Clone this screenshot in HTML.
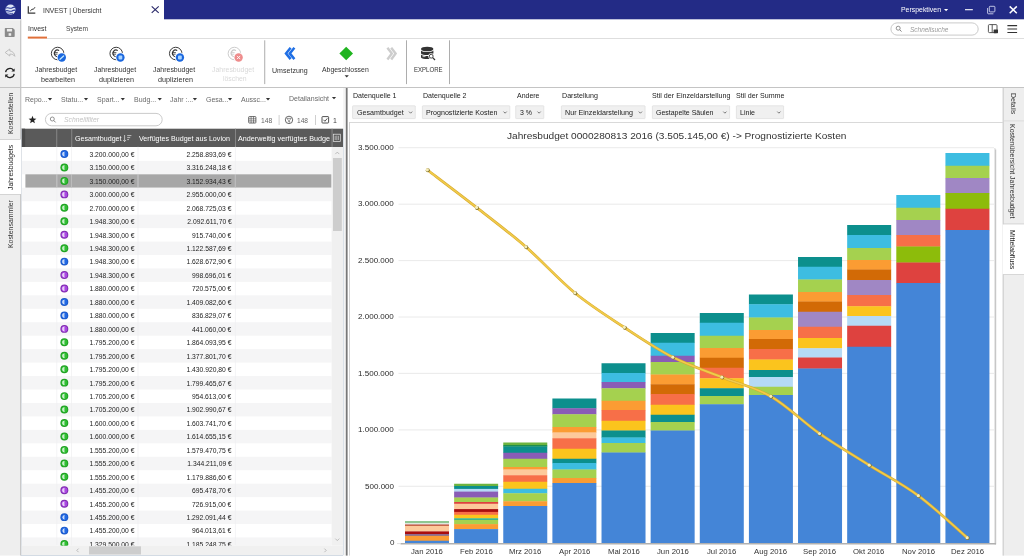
<!DOCTYPE html>
<html><head><meta charset="utf-8"><title>INVEST | Übersicht</title>
<style>
html,body{margin:0;padding:0;}
body{width:1024px;height:560px;overflow:hidden;background:#fff;position:relative;font-family:"Liberation Sans",sans-serif;}
#w{left:0;top:0;width:1024px;height:560px;will-change:transform;}
body div,body span.t{position:absolute;}
span.t{white-space:pre;}
svg.ov{position:absolute;left:0;top:0;}
</style></head><body><div id="w">
<svg class="ov" width="1024" height="560" viewBox="0 0 1024 560">
<rect x="0" y="0" width="1024" height="19.3" fill="#232b86"/>
<rect x="21" y="0" width="143" height="20" fill="#fff"/>
<rect x="0" y="19" width="20" height="536.6" fill="#eeeeee"/>
<rect x="20.1" y="19" width="1.2" height="536.6" fill="#c4c4c4"/>
<rect x="0" y="139.5" width="21" height="54.5" fill="#fff"/>
<rect x="0" y="19.2" width="20.6" height="1.2" fill="#f4f4f4"/>
<rect x="0" y="139" width="20" height="1" fill="#d4d4d4"/>
<rect x="0" y="194" width="20" height="1" fill="#d4d4d4"/>
<rect x="0" y="87" width="21" height="1" fill="#c4c4c4"/>
<rect x="47" y="38" width="977" height="1" fill="#dedede"/>
<rect x="27.8" y="36.6" width="19.2" height="2" fill="#e0703a"/>
<rect x="21" y="87" width="1003" height="1" fill="#c4c4c4"/>
<rect x="890.9" y="22.9" width="87.3" height="12.2" rx="6.1" fill="#fff" stroke="#c4c4c4" stroke-width="0.9"/>
<rect x="264.5" y="40.3" width="0.65" height="43.8" fill="#808080"/>
<rect x="406.0" y="40.3" width="0.65" height="43.8" fill="#808080"/>
<rect x="449.3" y="40.3" width="0.65" height="43.8" fill="#808080"/>
<rect x="45.4" y="113.4" width="116.8" height="12.4" rx="6.2" fill="#fff" stroke="#c4c4c4" stroke-width="0.9"/>
<rect x="278.6" y="115" width="1" height="10" fill="#cfcfcf"/>
<rect x="315" y="115" width="1" height="10" fill="#cfcfcf"/>
<rect x="21.5" y="128.7" width="321.5" height="18.3" fill="#5a5a5a"/>
<rect x="21.5" y="128.7" width="3.6" height="18.3" fill="#4a4a4a"/>
<rect x="56.3" y="128.7" width="0.9" height="18.3" fill="#8a8a8a"/>
<rect x="71.3" y="128.7" width="0.9" height="18.3" fill="#8a8a8a"/>
<rect x="235" y="128.7" width="0.9" height="18.3" fill="#8a8a8a"/>
<rect x="331.6" y="128.7" width="0.9" height="18.3" fill="#8a8a8a"/>
<clipPath id="tbb"><rect x="21" y="146.6" width="322" height="399"/></clipPath><g clip-path="url(#tbb)">
<rect x="21.7" y="160.85" width="309.8" height="13.450" fill="#f5f5f6"/>
<rect x="25.4" y="174.30" width="306.1" height="13.450" fill="#a7a7a7"/>
<rect x="21.7" y="187.75" width="309.8" height="13.450" fill="#f5f5f6"/>
<rect x="21.7" y="214.65" width="309.8" height="13.450" fill="#f5f5f6"/>
<rect x="21.7" y="241.55" width="309.8" height="13.450" fill="#f5f5f6"/>
<rect x="21.7" y="268.45" width="309.8" height="13.450" fill="#f5f5f6"/>
<rect x="21.7" y="295.35" width="309.8" height="13.450" fill="#f5f5f6"/>
<rect x="21.7" y="322.25" width="309.8" height="13.450" fill="#f5f5f6"/>
<rect x="21.7" y="349.15" width="309.8" height="13.450" fill="#f5f5f6"/>
<rect x="21.7" y="376.05" width="309.8" height="13.450" fill="#f5f5f6"/>
<rect x="21.7" y="402.95" width="309.8" height="13.450" fill="#f5f5f6"/>
<rect x="21.7" y="429.85" width="309.8" height="13.450" fill="#f5f5f6"/>
<rect x="21.7" y="456.75" width="309.8" height="13.450" fill="#f5f5f6"/>
<rect x="21.7" y="483.65" width="309.8" height="13.450" fill="#f5f5f6"/>
<rect x="21.7" y="510.55" width="309.8" height="13.450" fill="#f5f5f6"/>
<rect x="21.7" y="537.45" width="309.8" height="13.450" fill="#f5f5f6"/>
<rect x="56.4" y="146.6" width="0.8" height="399" fill="#eeeef0" opacity="0.8"/>
<rect x="56.4" y="174.30" width="0.8" height="13.45" fill="#b4b4b4"/>
<rect x="71.2" y="146.6" width="0.8" height="399" fill="#eeeef0" opacity="0.8"/>
<rect x="71.2" y="174.30" width="0.8" height="13.45" fill="#b4b4b4"/>
<rect x="137.6" y="146.6" width="0.8" height="399" fill="#eeeef0" opacity="0.8"/>
<rect x="137.6" y="174.30" width="0.8" height="13.45" fill="#b4b4b4"/>
<rect x="234.9" y="146.6" width="0.8" height="399" fill="#eeeef0" opacity="0.8"/>
<rect x="234.9" y="174.30" width="0.8" height="13.45" fill="#b4b4b4"/>
</g>
<rect x="21" y="128.7" width="0.6" height="426.5" fill="#d4dbe3"/>
<rect x="21" y="555" width="322" height="0.8" fill="#c9d3de"/>
<rect x="331.6" y="147" width="11.4" height="398.6" fill="#f0f0f0"/>
<rect x="333" y="158" width="8.8" height="73" fill="#cdcdcd"/>
<rect x="21.8" y="545.6" width="321.2" height="9.4" fill="#f0f0f0"/>
<rect x="89" y="546.3" width="52" height="8.2" fill="#cdcdcd"/>
<rect x="343.2" y="88" width="2.4" height="467.6" fill="#f4f4f4"/>
<rect x="343" y="128.7" width="0.7" height="426.5" fill="#cfd8e2"/>
<rect x="345.8" y="88" width="1.8" height="467.6" fill="#787878"/>
<rect x="352.59999999999997" y="105.8" width="62.7" height="12.8" rx="0.5" fill="#f0f0f0" stroke="#dddddd" stroke-width="0.7"/>
<rect x="422.4" y="105.8" width="87.4" height="12.8" rx="0.5" fill="#f0f0f0" stroke="#dddddd" stroke-width="0.7"/>
<rect x="515.6999999999999" y="105.8" width="28.099999999999998" height="12.8" rx="0.5" fill="#f0f0f0" stroke="#dddddd" stroke-width="0.7"/>
<rect x="561.4" y="105.8" width="83.7" height="12.8" rx="0.5" fill="#f0f0f0" stroke="#dddddd" stroke-width="0.7"/>
<rect x="652.4" y="105.8" width="77.2" height="12.8" rx="0.5" fill="#f0f0f0" stroke="#dddddd" stroke-width="0.7"/>
<rect x="736.4" y="105.8" width="47.2" height="12.8" rx="0.5" fill="#f0f0f0" stroke="#dddddd" stroke-width="0.7"/>
<rect x="349.2" y="122.1" width="653.6" height="0.9" fill="#d5d5d5"/>
<rect x="349.1" y="122.1" width="0.9" height="433.5" fill="#cfcfcf"/>
<rect x="1003" y="88" width="21" height="467.6" fill="#eeeeee"/>
<rect x="1002.6" y="88" width="1.1" height="467.6" fill="#cacaca"/>
<rect x="1002.6" y="224.3" width="21.4" height="50" fill="#fff"/>
<rect x="1003" y="120.5" width="21" height="0.8" fill="#d8d8d8"/>
<rect x="1003" y="223.5" width="21" height="0.8" fill="#d0d0d0"/>
<rect x="1003" y="274.2" width="21" height="0.8" fill="#d0d0d0"/>
</svg>
<span class="t" style="left:6.59px;top:133.6px;transform-origin:0 0;transform:rotate(-90deg) scaleX(0.93);font-size:7.42px;line-height:8.9px;color:#333;">Kostenstellen</span>
<span class="t" style="left:6.59px;top:189.6px;transform-origin:0 0;transform:rotate(-90deg) scaleX(0.93);font-size:7.42px;line-height:8.9px;color:#222;">Jahresbudgets</span>
<span class="t" style="left:6.59px;top:248.1px;transform-origin:0 0;transform:rotate(-90deg) scaleX(0.93);font-size:7.42px;line-height:8.9px;color:#333;">Kostensammler</span>
<span class="t " style="top:6.65px;font-size:7.29px;line-height:8.75px;color:#333;left:42.5px;transform-origin:0 50%;transform:scaleX(0.93);">INVEST | Übersicht</span>
<span class="t " style="top:25.27px;font-size:7.46px;line-height:8.95px;color:#333;left:27.8px;transform-origin:0 50%;transform:scaleX(0.93);">Invest</span>
<span class="t " style="top:25.45px;font-size:7.1px;line-height:8.52px;color:#444;left:65.6px;transform-origin:0 50%;transform:scaleX(0.93);">System</span>
<span class="t " style="top:6.48px;font-size:7.44px;line-height:8.93px;color:#fff;left:901px;transform-origin:0 50%;transform:scaleX(0.93);">Perspektiven</span>
<span class="t " style="top:25.82px;font-size:6.96px;line-height:8.35px;color:#9a9a9a;font-style:italic;left:909.5px;transform-origin:0 50%;transform:scaleX(0.93);">Schnellsuche</span>
<span class="t " style="top:65.97px;font-size:7.47px;line-height:8.96px;color:#333;left:35.44px;transform-origin:0 50%;transform:scaleX(0.93);">Jahresbudget</span>
<span class="t " style="top:75.23px;font-size:7.73px;line-height:9.28px;color:#333;left:40.61px;transform-origin:0 50%;transform:scaleX(0.93);">bearbeiten</span>
<span class="t " style="top:65.97px;font-size:7.47px;line-height:8.96px;color:#333;left:93.94px;transform-origin:0 50%;transform:scaleX(0.93);">Jahresbudget</span>
<span class="t " style="top:75.21px;font-size:7.78px;line-height:9.34px;color:#333;left:98.89px;transform-origin:0 50%;transform:scaleX(0.93);">duplizieren</span>
<span class="t " style="top:65.97px;font-size:7.47px;line-height:8.96px;color:#333;left:153.44px;transform-origin:0 50%;transform:scaleX(0.93);">Jahresbudget</span>
<span class="t " style="top:75.21px;font-size:7.78px;line-height:9.34px;color:#333;left:158.39px;transform-origin:0 50%;transform:scaleX(0.93);">duplizieren</span>
<span class="t " style="top:65.97px;font-size:7.47px;line-height:8.96px;color:#d9d9d9;left:212.24px;transform-origin:0 50%;transform:scaleX(0.93);">Jahresbudget</span>
<span class="t " style="top:75.4px;font-size:7.4px;line-height:8.88px;color:#d9d9d9;left:222.64px;transform-origin:0 50%;transform:scaleX(0.93);">löschen</span>
<span class="t " style="top:65.8px;font-size:7.6px;line-height:9.12px;color:#333;left:271.52px;transform-origin:0 50%;transform:scaleX(0.93);">Umsetzung</span>
<span class="t " style="top:65.9px;font-size:7.41px;line-height:8.89px;color:#333;left:322.23px;transform-origin:0 50%;transform:scaleX(0.93);">Abgeschlossen</span>
<span class="t " style="top:65.91px;font-size:7.38px;line-height:8.86px;color:#333;left:413.8px;transform-origin:0 50%;transform:scaleX(0.82);">EXPLORE</span>
<span class="t " style="top:94.93px;font-size:7.53px;line-height:9.04px;color:#6a6a6a;left:25px;transform-origin:0 50%;transform:scaleX(0.93);">Repo...</span>
<span class="t " style="top:94.93px;font-size:7.53px;line-height:9.04px;color:#6a6a6a;left:61px;transform-origin:0 50%;transform:scaleX(0.93);">Statu...</span>
<span class="t " style="top:94.93px;font-size:7.53px;line-height:9.04px;color:#6a6a6a;left:97px;transform-origin:0 50%;transform:scaleX(0.93);">Spart...</span>
<span class="t " style="top:94.93px;font-size:7.53px;line-height:9.04px;color:#6a6a6a;left:133.5px;transform-origin:0 50%;transform:scaleX(0.93);">Budg...</span>
<span class="t " style="top:94.93px;font-size:7.53px;line-height:9.04px;color:#6a6a6a;left:170px;transform-origin:0 50%;transform:scaleX(0.93);">Jahr :...</span>
<span class="t " style="top:94.93px;font-size:7.53px;line-height:9.04px;color:#6a6a6a;left:206px;transform-origin:0 50%;transform:scaleX(0.93);">Gesa...</span>
<span class="t " style="top:94.93px;font-size:7.53px;line-height:9.04px;color:#6a6a6a;left:241px;transform-origin:0 50%;transform:scaleX(0.93);">Aussc...</span>
<span class="t " style="top:93.83px;font-size:7.53px;line-height:9.04px;color:#6a6a6a;left:289px;transform-origin:0 50%;transform:scaleX(0.93);">Detailansicht</span>
<span class="t " style="top:116.16px;font-size:7.28px;line-height:8.74px;color:#c4c4c4;font-style:italic;left:63.8px;transform-origin:0 50%;transform:scaleX(0.93);">Schnellfilter</span>
<span class="t " style="top:116.56px;font-size:7.28px;line-height:8.74px;color:#666;left:260.5px;transform-origin:0 50%;transform:scaleX(0.93);">148</span>
<span class="t " style="top:116.65px;font-size:7.09px;line-height:8.51px;color:#666;left:297px;transform-origin:0 50%;transform:scaleX(0.93);">148</span>
<span class="t " style="top:116.43px;font-size:7.53px;line-height:9.04px;color:#444;left:333.3px;transform-origin:0 50%;transform:scaleX(0.93);">1</span>
<span class="t " style="top:133.88px;font-size:7.64px;line-height:9.17px;color:#fff;left:74.5px;transform-origin:0 50%;transform:scaleX(0.93);">Gesamtbudget</span>
<span class="t " style="top:133.87px;font-size:7.65px;line-height:9.18px;color:#fff;left:139px;transform-origin:0 50%;transform:scaleX(0.93);">Verfügtes Budget aus Lovion</span>
<span class="t " style="top:133.83px;font-size:7.74px;line-height:9.29px;color:#fff;left:238px;transform-origin:0 50%;transform:scaleX(0.93);">Anderweitig verfügtes Budge</span>
<div style="left:21.5px;top:147.4px;width:310px;height:398.20000000000005px;overflow:hidden;">
<span class="t" style="right:197.10px;top:3.47px;font-size:7.26px;line-height:8.71px;color:#222;transform-origin:100% 50%;transform:scaleX(0.93)">3.200.000,00 €</span><span class="t" style="right:99.80px;top:3.47px;font-size:7.26px;line-height:8.71px;color:#222;transform-origin:100% 50%;transform:scaleX(0.93)">2.258.893,69 €</span><span class="t" style="right:197.10px;top:16.92px;font-size:7.26px;line-height:8.71px;color:#222;transform-origin:100% 50%;transform:scaleX(0.93)">3.150.000,00 €</span><span class="t" style="right:99.80px;top:16.92px;font-size:7.26px;line-height:8.71px;color:#222;transform-origin:100% 50%;transform:scaleX(0.93)">3.316.248,18 €</span><span class="t" style="right:197.10px;top:30.37px;font-size:7.26px;line-height:8.71px;color:#222;transform-origin:100% 50%;transform:scaleX(0.93)">3.150.000,00 €</span><span class="t" style="right:99.80px;top:30.37px;font-size:7.26px;line-height:8.71px;color:#222;transform-origin:100% 50%;transform:scaleX(0.93)">3.152.934,43 €</span><span class="t" style="right:197.10px;top:43.82px;font-size:7.26px;line-height:8.71px;color:#222;transform-origin:100% 50%;transform:scaleX(0.93)">3.000.000,00 €</span><span class="t" style="right:99.80px;top:43.82px;font-size:7.26px;line-height:8.71px;color:#222;transform-origin:100% 50%;transform:scaleX(0.93)">2.955.000,00 €</span><span class="t" style="right:197.10px;top:57.27px;font-size:7.26px;line-height:8.71px;color:#222;transform-origin:100% 50%;transform:scaleX(0.93)">2.700.000,00 €</span><span class="t" style="right:99.80px;top:57.27px;font-size:7.26px;line-height:8.71px;color:#222;transform-origin:100% 50%;transform:scaleX(0.93)">2.068.725,03 €</span><span class="t" style="right:197.10px;top:70.72px;font-size:7.26px;line-height:8.71px;color:#222;transform-origin:100% 50%;transform:scaleX(0.93)">1.948.300,00 €</span><span class="t" style="right:99.80px;top:70.72px;font-size:7.26px;line-height:8.71px;color:#222;transform-origin:100% 50%;transform:scaleX(0.93)">2.092.611,70 €</span><span class="t" style="right:197.10px;top:84.17px;font-size:7.26px;line-height:8.71px;color:#222;transform-origin:100% 50%;transform:scaleX(0.93)">1.948.300,00 €</span><span class="t" style="right:99.80px;top:84.17px;font-size:7.26px;line-height:8.71px;color:#222;transform-origin:100% 50%;transform:scaleX(0.93)">915.740,00 €</span><span class="t" style="right:197.10px;top:97.62px;font-size:7.26px;line-height:8.71px;color:#222;transform-origin:100% 50%;transform:scaleX(0.93)">1.948.300,00 €</span><span class="t" style="right:99.80px;top:97.62px;font-size:7.26px;line-height:8.71px;color:#222;transform-origin:100% 50%;transform:scaleX(0.93)">1.122.587,69 €</span><span class="t" style="right:197.10px;top:111.07px;font-size:7.26px;line-height:8.71px;color:#222;transform-origin:100% 50%;transform:scaleX(0.93)">1.948.300,00 €</span><span class="t" style="right:99.80px;top:111.07px;font-size:7.26px;line-height:8.71px;color:#222;transform-origin:100% 50%;transform:scaleX(0.93)">1.628.672,90 €</span><span class="t" style="right:197.10px;top:124.52px;font-size:7.26px;line-height:8.71px;color:#222;transform-origin:100% 50%;transform:scaleX(0.93)">1.948.300,00 €</span><span class="t" style="right:99.80px;top:124.52px;font-size:7.26px;line-height:8.71px;color:#222;transform-origin:100% 50%;transform:scaleX(0.93)">998.696,01 €</span><span class="t" style="right:197.10px;top:137.97px;font-size:7.26px;line-height:8.71px;color:#222;transform-origin:100% 50%;transform:scaleX(0.93)">1.880.000,00 €</span><span class="t" style="right:99.80px;top:137.97px;font-size:7.26px;line-height:8.71px;color:#222;transform-origin:100% 50%;transform:scaleX(0.93)">720.575,00 €</span><span class="t" style="right:197.10px;top:151.42px;font-size:7.26px;line-height:8.71px;color:#222;transform-origin:100% 50%;transform:scaleX(0.93)">1.880.000,00 €</span><span class="t" style="right:99.80px;top:151.42px;font-size:7.26px;line-height:8.71px;color:#222;transform-origin:100% 50%;transform:scaleX(0.93)">1.409.082,60 €</span><span class="t" style="right:197.10px;top:164.87px;font-size:7.26px;line-height:8.71px;color:#222;transform-origin:100% 50%;transform:scaleX(0.93)">1.880.000,00 €</span><span class="t" style="right:99.80px;top:164.87px;font-size:7.26px;line-height:8.71px;color:#222;transform-origin:100% 50%;transform:scaleX(0.93)">836.829,07 €</span><span class="t" style="right:197.10px;top:178.32px;font-size:7.26px;line-height:8.71px;color:#222;transform-origin:100% 50%;transform:scaleX(0.93)">1.880.000,00 €</span><span class="t" style="right:99.80px;top:178.32px;font-size:7.26px;line-height:8.71px;color:#222;transform-origin:100% 50%;transform:scaleX(0.93)">441.060,00 €</span><span class="t" style="right:197.10px;top:191.77px;font-size:7.26px;line-height:8.71px;color:#222;transform-origin:100% 50%;transform:scaleX(0.93)">1.795.200,00 €</span><span class="t" style="right:99.80px;top:191.77px;font-size:7.26px;line-height:8.71px;color:#222;transform-origin:100% 50%;transform:scaleX(0.93)">1.864.093,95 €</span><span class="t" style="right:197.10px;top:205.22px;font-size:7.26px;line-height:8.71px;color:#222;transform-origin:100% 50%;transform:scaleX(0.93)">1.795.200,00 €</span><span class="t" style="right:99.80px;top:205.22px;font-size:7.26px;line-height:8.71px;color:#222;transform-origin:100% 50%;transform:scaleX(0.93)">1.377.801,70 €</span><span class="t" style="right:197.10px;top:218.67px;font-size:7.26px;line-height:8.71px;color:#222;transform-origin:100% 50%;transform:scaleX(0.93)">1.795.200,00 €</span><span class="t" style="right:99.80px;top:218.67px;font-size:7.26px;line-height:8.71px;color:#222;transform-origin:100% 50%;transform:scaleX(0.93)">1.430.920,80 €</span><span class="t" style="right:197.10px;top:232.12px;font-size:7.26px;line-height:8.71px;color:#222;transform-origin:100% 50%;transform:scaleX(0.93)">1.795.200,00 €</span><span class="t" style="right:99.80px;top:232.12px;font-size:7.26px;line-height:8.71px;color:#222;transform-origin:100% 50%;transform:scaleX(0.93)">1.799.465,67 €</span><span class="t" style="right:197.10px;top:245.57px;font-size:7.26px;line-height:8.71px;color:#222;transform-origin:100% 50%;transform:scaleX(0.93)">1.705.200,00 €</span><span class="t" style="right:99.80px;top:245.57px;font-size:7.26px;line-height:8.71px;color:#222;transform-origin:100% 50%;transform:scaleX(0.93)">954.613,00 €</span><span class="t" style="right:197.10px;top:259.02px;font-size:7.26px;line-height:8.71px;color:#222;transform-origin:100% 50%;transform:scaleX(0.93)">1.705.200,00 €</span><span class="t" style="right:99.80px;top:259.02px;font-size:7.26px;line-height:8.71px;color:#222;transform-origin:100% 50%;transform:scaleX(0.93)">1.902.990,67 €</span><span class="t" style="right:197.10px;top:272.47px;font-size:7.26px;line-height:8.71px;color:#222;transform-origin:100% 50%;transform:scaleX(0.93)">1.600.000,00 €</span><span class="t" style="right:99.80px;top:272.47px;font-size:7.26px;line-height:8.71px;color:#222;transform-origin:100% 50%;transform:scaleX(0.93)">1.603.741,70 €</span><span class="t" style="right:197.10px;top:285.92px;font-size:7.26px;line-height:8.71px;color:#222;transform-origin:100% 50%;transform:scaleX(0.93)">1.600.000,00 €</span><span class="t" style="right:99.80px;top:285.92px;font-size:7.26px;line-height:8.71px;color:#222;transform-origin:100% 50%;transform:scaleX(0.93)">1.614.655,15 €</span><span class="t" style="right:197.10px;top:299.37px;font-size:7.26px;line-height:8.71px;color:#222;transform-origin:100% 50%;transform:scaleX(0.93)">1.555.200,00 €</span><span class="t" style="right:99.80px;top:299.37px;font-size:7.26px;line-height:8.71px;color:#222;transform-origin:100% 50%;transform:scaleX(0.93)">1.579.470,75 €</span><span class="t" style="right:197.10px;top:312.82px;font-size:7.26px;line-height:8.71px;color:#222;transform-origin:100% 50%;transform:scaleX(0.93)">1.555.200,00 €</span><span class="t" style="right:99.80px;top:312.82px;font-size:7.26px;line-height:8.71px;color:#222;transform-origin:100% 50%;transform:scaleX(0.93)">1.344.211,09 €</span><span class="t" style="right:197.10px;top:326.27px;font-size:7.26px;line-height:8.71px;color:#222;transform-origin:100% 50%;transform:scaleX(0.93)">1.555.200,00 €</span><span class="t" style="right:99.80px;top:326.27px;font-size:7.26px;line-height:8.71px;color:#222;transform-origin:100% 50%;transform:scaleX(0.93)">1.179.886,60 €</span><span class="t" style="right:197.10px;top:339.72px;font-size:7.26px;line-height:8.71px;color:#222;transform-origin:100% 50%;transform:scaleX(0.93)">1.455.200,00 €</span><span class="t" style="right:99.80px;top:339.72px;font-size:7.26px;line-height:8.71px;color:#222;transform-origin:100% 50%;transform:scaleX(0.93)">695.478,70 €</span><span class="t" style="right:197.10px;top:353.17px;font-size:7.26px;line-height:8.71px;color:#222;transform-origin:100% 50%;transform:scaleX(0.93)">1.455.200,00 €</span><span class="t" style="right:99.80px;top:353.17px;font-size:7.26px;line-height:8.71px;color:#222;transform-origin:100% 50%;transform:scaleX(0.93)">726.915,00 €</span><span class="t" style="right:197.10px;top:366.62px;font-size:7.26px;line-height:8.71px;color:#222;transform-origin:100% 50%;transform:scaleX(0.93)">1.455.200,00 €</span><span class="t" style="right:99.80px;top:366.62px;font-size:7.26px;line-height:8.71px;color:#222;transform-origin:100% 50%;transform:scaleX(0.93)">1.292.091,44 €</span><span class="t" style="right:197.10px;top:380.07px;font-size:7.26px;line-height:8.71px;color:#222;transform-origin:100% 50%;transform:scaleX(0.93)">1.455.200,00 €</span><span class="t" style="right:99.80px;top:380.07px;font-size:7.26px;line-height:8.71px;color:#222;transform-origin:100% 50%;transform:scaleX(0.93)">964.013,61 €</span><span class="t" style="right:197.10px;top:393.52px;font-size:7.26px;line-height:8.71px;color:#222;transform-origin:100% 50%;transform:scaleX(0.93)">1.329.500,00 €</span><span class="t" style="right:99.80px;top:393.52px;font-size:7.26px;line-height:8.71px;color:#222;transform-origin:100% 50%;transform:scaleX(0.93)">1.185.248,75 €</span>
</div>
<span class="t " style="top:91.11px;font-size:7.58px;line-height:9.1px;color:#222;left:352.5px;transform-origin:0 50%;transform:scaleX(0.93);">Datenquelle 1</span>
<span class="t " style="top:108.37px;font-size:7.66px;line-height:9.19px;color:#222;left:356.6px;transform-origin:0 50%;transform:scaleX(0.93);">Gesamtbudget</span>
<span class="t " style="top:91.11px;font-size:7.58px;line-height:9.1px;color:#222;left:422.5px;transform-origin:0 50%;transform:scaleX(0.93);">Datenquelle 2</span>
<span class="t " style="top:108.38px;font-size:7.64px;line-height:9.17px;color:#222;left:426.4px;transform-origin:0 50%;transform:scaleX(0.93);">Prognostizierte Kosten</span>
<span class="t " style="top:91.15px;font-size:7.5px;line-height:9.0px;color:#222;left:517px;transform-origin:0 50%;transform:scaleX(0.93);">Andere</span>
<span class="t " style="top:108.45px;font-size:7.49px;line-height:8.99px;color:#222;left:519.7px;transform-origin:0 50%;transform:scaleX(0.93);">3 %</span>
<span class="t " style="top:91.08px;font-size:7.65px;line-height:9.18px;color:#222;left:562px;transform-origin:0 50%;transform:scaleX(0.93);">Darstellung</span>
<span class="t " style="top:108.35px;font-size:7.69px;line-height:9.23px;color:#222;left:565.4px;transform-origin:0 50%;transform:scaleX(0.93);">Nur Einzeldarstellung</span>
<span class="t " style="top:91.07px;font-size:7.67px;line-height:9.2px;color:#222;left:652px;transform-origin:0 50%;transform:scaleX(0.93);">Stil der Einzeldarstellung</span>
<span class="t " style="top:108.45px;font-size:7.51px;line-height:9.01px;color:#222;left:656.4px;transform-origin:0 50%;transform:scaleX(0.93);">Gestapelte Säulen</span>
<span class="t " style="top:91.08px;font-size:7.63px;line-height:9.16px;color:#222;left:736px;transform-origin:0 50%;transform:scaleX(0.93);">Stil der Summe</span>
<span class="t " style="top:108.38px;font-size:7.63px;line-height:9.16px;color:#222;left:740.4px;transform-origin:0 50%;transform:scaleX(0.93);">Linie</span>
<span class="t " style="top:129.87px;font-size:9.46px;line-height:11.35px;color:#333;left:507px;transform-origin:0 50%;transform:scaleX(1.07);">Jahresbudget 0000280813 2016 (3.505.145,00 €) -&gt; Prognostizierte Kosten</span>
<span class="t" style="left:1016.93px;top:92.6px;transform-origin:0 0;transform:rotate(90deg) scaleX(0.93);font-size:7.47px;line-height:8.96px;color:#333;">Details</span>
<span class="t" style="left:1016.97px;top:124.2px;transform-origin:0 0;transform:rotate(90deg) scaleX(0.93);font-size:7.53px;line-height:9.04px;color:#333;">Kostenübersicht Jahresbudget</span>
<span class="t" style="left:1017.02px;top:229.6px;transform-origin:0 0;transform:rotate(90deg) scaleX(0.93);font-size:7.63px;line-height:9.16px;color:#222;">Mittelabfluss</span>
<span class="t " style="top:142.94px;font-size:7.52px;line-height:9.02px;color:#2c2c2c;left:358.19px;transform-origin:0 50%;transform:scaleX(1.07);">3.500.000</span>
<span class="t " style="top:199.44px;font-size:7.52px;line-height:9.02px;color:#2c2c2c;left:358.19px;transform-origin:0 50%;transform:scaleX(1.07);">3.000.000</span>
<span class="t " style="top:255.84px;font-size:7.52px;line-height:9.02px;color:#2c2c2c;left:358.19px;transform-origin:0 50%;transform:scaleX(1.07);">2.500.000</span>
<span class="t " style="top:312.24px;font-size:7.52px;line-height:9.02px;color:#2c2c2c;left:358.19px;transform-origin:0 50%;transform:scaleX(1.07);">2.000.000</span>
<span class="t " style="top:368.64px;font-size:7.52px;line-height:9.02px;color:#2c2c2c;left:358.19px;transform-origin:0 50%;transform:scaleX(1.07);">1.500.000</span>
<span class="t " style="top:425.14px;font-size:7.52px;line-height:9.02px;color:#2c2c2c;left:358.19px;transform-origin:0 50%;transform:scaleX(1.07);">1.000.000</span>
<span class="t " style="top:481.54px;font-size:7.52px;line-height:9.02px;color:#2c2c2c;left:364.9px;transform-origin:0 50%;transform:scaleX(1.07);">500.000</span>
<span class="t " style="top:538.04px;font-size:7.52px;line-height:9.02px;color:#2c2c2c;left:389.52px;transform-origin:0 50%;transform:scaleX(1.07);">0</span>
<span class="t " style="top:548.18px;font-size:7.24px;line-height:8.69px;color:#333;left:411.05px;transform-origin:0 50%;transform:scaleX(1.07);">Jan 2016</span>
<span class="t " style="top:548.18px;font-size:7.24px;line-height:8.69px;color:#333;left:459.76px;transform-origin:0 50%;transform:scaleX(1.07);">Feb 2016</span>
<span class="t " style="top:548.18px;font-size:7.24px;line-height:8.69px;color:#333;left:509.11px;transform-origin:0 50%;transform:scaleX(1.07);">Mrz 2016</span>
<span class="t " style="top:548.18px;font-size:7.24px;line-height:8.69px;color:#333;left:558.66px;transform-origin:0 50%;transform:scaleX(1.07);">Apr 2016</span>
<span class="t " style="top:548.18px;font-size:7.24px;line-height:8.69px;color:#333;left:607.58px;transform-origin:0 50%;transform:scaleX(1.07);">Mai 2016</span>
<span class="t " style="top:548.18px;font-size:7.24px;line-height:8.69px;color:#333;left:656.7px;transform-origin:0 50%;transform:scaleX(1.07);">Jun 2016</span>
<span class="t " style="top:548.18px;font-size:7.24px;line-height:8.69px;color:#333;left:707.13px;transform-origin:0 50%;transform:scaleX(1.07);">Jul 2016</span>
<span class="t " style="top:548.18px;font-size:7.24px;line-height:8.69px;color:#333;left:754.32px;transform-origin:0 50%;transform:scaleX(1.07);">Aug 2016</span>
<span class="t " style="top:548.18px;font-size:7.24px;line-height:8.69px;color:#333;left:803.45px;transform-origin:0 50%;transform:scaleX(1.07);">Sep 2016</span>
<span class="t " style="top:548.18px;font-size:7.24px;line-height:8.69px;color:#333;left:853.44px;transform-origin:0 50%;transform:scaleX(1.07);">Okt 2016</span>
<span class="t " style="top:548.18px;font-size:7.24px;line-height:8.69px;color:#333;left:901.71px;transform-origin:0 50%;transform:scaleX(1.07);">Nov 2016</span>
<span class="t " style="top:548.18px;font-size:7.24px;line-height:8.69px;color:#333;left:950.84px;transform-origin:0 50%;transform:scaleX(1.07);">Dez 2016</span>
<svg class="ov" width="1024" height="560" viewBox="0 0 1024 560">
<path d="M47.9,98.0 h4.2 l-2.1,2.4z" fill="#333"/>
<path d="M83.9,98.0 h4.2 l-2.1,2.4z" fill="#333"/>
<path d="M120.7,98.0 h4.2 l-2.1,2.4z" fill="#333"/>
<path d="M157.65,98.0 h4.2 l-2.1,2.4z" fill="#333"/>
<path d="M192.8,98.0 h4.2 l-2.1,2.4z" fill="#333"/>
<path d="M227.9,98.0 h4.2 l-2.1,2.4z" fill="#333"/>
<path d="M265.9,98.0 h4.2 l-2.1,2.4z" fill="#333"/>
<path d="M331.9,96.9 h4.2 l-2.1,2.4z" fill="#333"/>
<clipPath id="tb"><rect x="21" y="147" width="311" height="398.6"/></clipPath><g clip-path="url(#tb)">
<circle cx="64.35" cy="154.03" r="3.95" fill="#1c58c8"/><circle cx="64.35" cy="154.03" r="3.0" fill="#2169e4"/>
<path d="M64.95,151.72 A2.7,2.3 0 0 0 64.95,156.33z" fill="#fff" opacity="0.35"/>
<path d="M64.95,151.72 A2.7,2.3 0 0 0 64.95,156.33 A1.2,2.3 0 0 1 64.95,151.72z" fill="#fff" opacity="0.7"/>
<circle cx="64.35" cy="167.47" r="3.95" fill="#1f9f22"/><circle cx="64.35" cy="167.47" r="3.0" fill="#30bf33"/>
<path d="M64.95,165.17 A2.7,2.3 0 0 0 64.95,169.78z" fill="#fff" opacity="0.35"/>
<path d="M64.95,165.17 A2.7,2.3 0 0 0 64.95,169.78 A1.2,2.3 0 0 1 64.95,165.17z" fill="#fff" opacity="0.7"/>
<circle cx="64.35" cy="180.93" r="3.95" fill="#1f9f22"/><circle cx="64.35" cy="180.93" r="3.0" fill="#30bf33"/>
<path d="M64.95,178.62 A2.7,2.3 0 0 0 64.95,183.23z" fill="#fff" opacity="0.35"/>
<path d="M64.95,178.62 A2.7,2.3 0 0 0 64.95,183.23 A1.2,2.3 0 0 1 64.95,178.62z" fill="#fff" opacity="0.7"/>
<circle cx="64.35" cy="194.38" r="3.95" fill="#7d2cac"/><circle cx="64.35" cy="194.38" r="3.0" fill="#aa47e2"/>
<path d="M64.95,192.07 A2.7,2.3 0 0 0 64.95,196.68z" fill="#fff" opacity="0.35"/>
<path d="M64.95,192.07 A2.7,2.3 0 0 0 64.95,196.68 A1.2,2.3 0 0 1 64.95,192.07z" fill="#fff" opacity="0.7"/>
<circle cx="64.35" cy="207.82" r="3.95" fill="#1f9f22"/><circle cx="64.35" cy="207.82" r="3.0" fill="#30bf33"/>
<path d="M64.95,205.52 A2.7,2.3 0 0 0 64.95,210.12z" fill="#fff" opacity="0.35"/>
<path d="M64.95,205.52 A2.7,2.3 0 0 0 64.95,210.12 A1.2,2.3 0 0 1 64.95,205.52z" fill="#fff" opacity="0.7"/>
<circle cx="64.35" cy="221.28" r="3.95" fill="#1f9f22"/><circle cx="64.35" cy="221.28" r="3.0" fill="#30bf33"/>
<path d="M64.95,218.97 A2.7,2.3 0 0 0 64.95,223.58z" fill="#fff" opacity="0.35"/>
<path d="M64.95,218.97 A2.7,2.3 0 0 0 64.95,223.58 A1.2,2.3 0 0 1 64.95,218.97z" fill="#fff" opacity="0.7"/>
<circle cx="64.35" cy="234.72" r="3.95" fill="#7d2cac"/><circle cx="64.35" cy="234.72" r="3.0" fill="#aa47e2"/>
<path d="M64.95,232.42 A2.7,2.3 0 0 0 64.95,237.03z" fill="#fff" opacity="0.35"/>
<path d="M64.95,232.42 A2.7,2.3 0 0 0 64.95,237.03 A1.2,2.3 0 0 1 64.95,232.42z" fill="#fff" opacity="0.7"/>
<circle cx="64.35" cy="248.18" r="3.95" fill="#1f9f22"/><circle cx="64.35" cy="248.18" r="3.0" fill="#30bf33"/>
<path d="M64.95,245.88 A2.7,2.3 0 0 0 64.95,250.48z" fill="#fff" opacity="0.35"/>
<path d="M64.95,245.88 A2.7,2.3 0 0 0 64.95,250.48 A1.2,2.3 0 0 1 64.95,245.88z" fill="#fff" opacity="0.7"/>
<circle cx="64.35" cy="261.62" r="3.95" fill="#1c58c8"/><circle cx="64.35" cy="261.62" r="3.0" fill="#2169e4"/>
<path d="M64.95,259.32 A2.7,2.3 0 0 0 64.95,263.93z" fill="#fff" opacity="0.35"/>
<path d="M64.95,259.32 A2.7,2.3 0 0 0 64.95,263.93 A1.2,2.3 0 0 1 64.95,259.32z" fill="#fff" opacity="0.7"/>
<circle cx="64.35" cy="275.07" r="3.95" fill="#7d2cac"/><circle cx="64.35" cy="275.07" r="3.0" fill="#aa47e2"/>
<path d="M64.95,272.77 A2.7,2.3 0 0 0 64.95,277.38z" fill="#fff" opacity="0.35"/>
<path d="M64.95,272.77 A2.7,2.3 0 0 0 64.95,277.38 A1.2,2.3 0 0 1 64.95,272.77z" fill="#fff" opacity="0.7"/>
<circle cx="64.35" cy="288.52" r="3.95" fill="#7d2cac"/><circle cx="64.35" cy="288.52" r="3.0" fill="#aa47e2"/>
<path d="M64.95,286.22 A2.7,2.3 0 0 0 64.95,290.82z" fill="#fff" opacity="0.35"/>
<path d="M64.95,286.22 A2.7,2.3 0 0 0 64.95,290.82 A1.2,2.3 0 0 1 64.95,286.22z" fill="#fff" opacity="0.7"/>
<circle cx="64.35" cy="301.98" r="3.95" fill="#1c58c8"/><circle cx="64.35" cy="301.98" r="3.0" fill="#2169e4"/>
<path d="M64.95,299.68 A2.7,2.3 0 0 0 64.95,304.28z" fill="#fff" opacity="0.35"/>
<path d="M64.95,299.68 A2.7,2.3 0 0 0 64.95,304.28 A1.2,2.3 0 0 1 64.95,299.68z" fill="#fff" opacity="0.7"/>
<circle cx="64.35" cy="315.42" r="3.95" fill="#1c58c8"/><circle cx="64.35" cy="315.42" r="3.0" fill="#2169e4"/>
<path d="M64.95,313.12 A2.7,2.3 0 0 0 64.95,317.72z" fill="#fff" opacity="0.35"/>
<path d="M64.95,313.12 A2.7,2.3 0 0 0 64.95,317.72 A1.2,2.3 0 0 1 64.95,313.12z" fill="#fff" opacity="0.7"/>
<circle cx="64.35" cy="328.88" r="3.95" fill="#7d2cac"/><circle cx="64.35" cy="328.88" r="3.0" fill="#aa47e2"/>
<path d="M64.95,326.57 A2.7,2.3 0 0 0 64.95,331.18z" fill="#fff" opacity="0.35"/>
<path d="M64.95,326.57 A2.7,2.3 0 0 0 64.95,331.18 A1.2,2.3 0 0 1 64.95,326.57z" fill="#fff" opacity="0.7"/>
<circle cx="64.35" cy="342.32" r="3.95" fill="#1f9f22"/><circle cx="64.35" cy="342.32" r="3.0" fill="#30bf33"/>
<path d="M64.95,340.02 A2.7,2.3 0 0 0 64.95,344.62z" fill="#fff" opacity="0.35"/>
<path d="M64.95,340.02 A2.7,2.3 0 0 0 64.95,344.62 A1.2,2.3 0 0 1 64.95,340.02z" fill="#fff" opacity="0.7"/>
<circle cx="64.35" cy="355.77" r="3.95" fill="#1f9f22"/><circle cx="64.35" cy="355.77" r="3.0" fill="#30bf33"/>
<path d="M64.95,353.47 A2.7,2.3 0 0 0 64.95,358.07z" fill="#fff" opacity="0.35"/>
<path d="M64.95,353.47 A2.7,2.3 0 0 0 64.95,358.07 A1.2,2.3 0 0 1 64.95,353.47z" fill="#fff" opacity="0.7"/>
<circle cx="64.35" cy="369.23" r="3.95" fill="#1f9f22"/><circle cx="64.35" cy="369.23" r="3.0" fill="#30bf33"/>
<path d="M64.95,366.93 A2.7,2.3 0 0 0 64.95,371.53z" fill="#fff" opacity="0.35"/>
<path d="M64.95,366.93 A2.7,2.3 0 0 0 64.95,371.53 A1.2,2.3 0 0 1 64.95,366.93z" fill="#fff" opacity="0.7"/>
<circle cx="64.35" cy="382.67" r="3.95" fill="#1f9f22"/><circle cx="64.35" cy="382.67" r="3.0" fill="#30bf33"/>
<path d="M64.95,380.37 A2.7,2.3 0 0 0 64.95,384.97z" fill="#fff" opacity="0.35"/>
<path d="M64.95,380.37 A2.7,2.3 0 0 0 64.95,384.97 A1.2,2.3 0 0 1 64.95,380.37z" fill="#fff" opacity="0.7"/>
<circle cx="64.35" cy="396.12" r="3.95" fill="#1f9f22"/><circle cx="64.35" cy="396.12" r="3.0" fill="#30bf33"/>
<path d="M64.95,393.82 A2.7,2.3 0 0 0 64.95,398.43z" fill="#fff" opacity="0.35"/>
<path d="M64.95,393.82 A2.7,2.3 0 0 0 64.95,398.43 A1.2,2.3 0 0 1 64.95,393.82z" fill="#fff" opacity="0.7"/>
<circle cx="64.35" cy="409.57" r="3.95" fill="#1f9f22"/><circle cx="64.35" cy="409.57" r="3.0" fill="#30bf33"/>
<path d="M64.95,407.27 A2.7,2.3 0 0 0 64.95,411.88z" fill="#fff" opacity="0.35"/>
<path d="M64.95,407.27 A2.7,2.3 0 0 0 64.95,411.88 A1.2,2.3 0 0 1 64.95,407.27z" fill="#fff" opacity="0.7"/>
<circle cx="64.35" cy="423.02" r="3.95" fill="#1f9f22"/><circle cx="64.35" cy="423.02" r="3.0" fill="#30bf33"/>
<path d="M64.95,420.72 A2.7,2.3 0 0 0 64.95,425.32z" fill="#fff" opacity="0.35"/>
<path d="M64.95,420.72 A2.7,2.3 0 0 0 64.95,425.32 A1.2,2.3 0 0 1 64.95,420.72z" fill="#fff" opacity="0.7"/>
<circle cx="64.35" cy="436.48" r="3.95" fill="#1f9f22"/><circle cx="64.35" cy="436.48" r="3.0" fill="#30bf33"/>
<path d="M64.95,434.18 A2.7,2.3 0 0 0 64.95,438.78z" fill="#fff" opacity="0.35"/>
<path d="M64.95,434.18 A2.7,2.3 0 0 0 64.95,438.78 A1.2,2.3 0 0 1 64.95,434.18z" fill="#fff" opacity="0.7"/>
<circle cx="64.35" cy="449.92" r="3.95" fill="#1f9f22"/><circle cx="64.35" cy="449.92" r="3.0" fill="#30bf33"/>
<path d="M64.95,447.62 A2.7,2.3 0 0 0 64.95,452.22z" fill="#fff" opacity="0.35"/>
<path d="M64.95,447.62 A2.7,2.3 0 0 0 64.95,452.22 A1.2,2.3 0 0 1 64.95,447.62z" fill="#fff" opacity="0.7"/>
<circle cx="64.35" cy="463.38" r="3.95" fill="#1f9f22"/><circle cx="64.35" cy="463.38" r="3.0" fill="#30bf33"/>
<path d="M64.95,461.07 A2.7,2.3 0 0 0 64.95,465.68z" fill="#fff" opacity="0.35"/>
<path d="M64.95,461.07 A2.7,2.3 0 0 0 64.95,465.68 A1.2,2.3 0 0 1 64.95,461.07z" fill="#fff" opacity="0.7"/>
<circle cx="64.35" cy="476.82" r="3.95" fill="#1f9f22"/><circle cx="64.35" cy="476.82" r="3.0" fill="#30bf33"/>
<path d="M64.95,474.52 A2.7,2.3 0 0 0 64.95,479.12z" fill="#fff" opacity="0.35"/>
<path d="M64.95,474.52 A2.7,2.3 0 0 0 64.95,479.12 A1.2,2.3 0 0 1 64.95,474.52z" fill="#fff" opacity="0.7"/>
<circle cx="64.35" cy="490.27" r="3.95" fill="#7d2cac"/><circle cx="64.35" cy="490.27" r="3.0" fill="#aa47e2"/>
<path d="M64.95,487.97 A2.7,2.3 0 0 0 64.95,492.57z" fill="#fff" opacity="0.35"/>
<path d="M64.95,487.97 A2.7,2.3 0 0 0 64.95,492.57 A1.2,2.3 0 0 1 64.95,487.97z" fill="#fff" opacity="0.7"/>
<circle cx="64.35" cy="503.73" r="3.95" fill="#7d2cac"/><circle cx="64.35" cy="503.73" r="3.0" fill="#aa47e2"/>
<path d="M64.95,501.43 A2.7,2.3 0 0 0 64.95,506.03z" fill="#fff" opacity="0.35"/>
<path d="M64.95,501.43 A2.7,2.3 0 0 0 64.95,506.03 A1.2,2.3 0 0 1 64.95,501.43z" fill="#fff" opacity="0.7"/>
<circle cx="64.35" cy="517.17" r="3.95" fill="#1c58c8"/><circle cx="64.35" cy="517.17" r="3.0" fill="#2169e4"/>
<path d="M64.95,514.88 A2.7,2.3 0 0 0 64.95,519.47z" fill="#fff" opacity="0.35"/>
<path d="M64.95,514.88 A2.7,2.3 0 0 0 64.95,519.47 A1.2,2.3 0 0 1 64.95,514.88z" fill="#fff" opacity="0.7"/>
<circle cx="64.35" cy="530.62" r="3.95" fill="#1c58c8"/><circle cx="64.35" cy="530.62" r="3.0" fill="#2169e4"/>
<path d="M64.95,528.33 A2.7,2.3 0 0 0 64.95,532.92z" fill="#fff" opacity="0.35"/>
<path d="M64.95,528.33 A2.7,2.3 0 0 0 64.95,532.92 A1.2,2.3 0 0 1 64.95,528.33z" fill="#fff" opacity="0.7"/>
<circle cx="64.35" cy="544.07" r="3.95" fill="#1f9f22"/><circle cx="64.35" cy="544.07" r="3.0" fill="#30bf33"/>
<path d="M64.95,541.77 A2.7,2.3 0 0 0 64.95,546.37z" fill="#fff" opacity="0.35"/>
<path d="M64.95,541.77 A2.7,2.3 0 0 0 64.95,546.37 A1.2,2.3 0 0 1 64.95,541.77z" fill="#fff" opacity="0.7"/>
</g>
<path d="M408.99999999999994,111.6 l1.6,1.6 l1.6,-1.6" fill="none" stroke="#444" stroke-width="0.7"/>
<path d="M503.49999999999994,111.6 l1.6,1.6 l1.6,-1.6" fill="none" stroke="#444" stroke-width="0.7"/>
<path d="M537.4999999999999,111.6 l1.6,1.6 l1.6,-1.6" fill="none" stroke="#444" stroke-width="0.7"/>
<path d="M638.8,111.6 l1.6,1.6 l1.6,-1.6" fill="none" stroke="#444" stroke-width="0.7"/>
<path d="M723.3,111.6 l1.6,1.6 l1.6,-1.6" fill="none" stroke="#444" stroke-width="0.7"/>
<path d="M777.3,111.6 l1.6,1.6 l1.6,-1.6" fill="none" stroke="#444" stroke-width="0.7"/>
<path d="M398.5,147.7 H994.0" stroke="#e4e4e4" stroke-width="0.8"/>
<path d="M398.5,204.2 H994.0" stroke="#e4e4e4" stroke-width="0.8"/>
<path d="M398.5,260.6 H994.0" stroke="#e4e4e4" stroke-width="0.8"/>
<path d="M398.5,317.0 H994.0" stroke="#e4e4e4" stroke-width="0.8"/>
<path d="M398.5,373.4 H994.0" stroke="#e4e4e4" stroke-width="0.8"/>
<path d="M398.5,429.9 H994.0" stroke="#e4e4e4" stroke-width="0.8"/>
<path d="M398.5,486.3 H994.0" stroke="#e4e4e4" stroke-width="0.8"/>
<path d="M994.9,148.0 V544.4" stroke="#d4d4d4" stroke-width="0.9"/>
<path d="M995.7,149.5 V544.4" stroke="#b9b9b9" stroke-width="0.9"/>
<rect x="405.00" y="521" width="44.0" height="2.55" fill="#8fc792"/>
<rect x="405.00" y="523.25" width="44.0" height="1.55" fill="#e9ece9"/>
<rect x="405.00" y="524.5" width="44.0" height="1.55" fill="#b5432f"/>
<rect x="405.00" y="525.75" width="44.0" height="5.95" fill="#fdc99b"/>
<rect x="405.00" y="531.4" width="44.0" height="3.15" fill="#a90e0e"/>
<rect x="405.00" y="534.25" width="44.0" height="1.80" fill="#7a6a9a"/>
<rect x="405.00" y="535.75" width="44.0" height="5.30" fill="#fb9c33"/>
<rect x="405.00" y="540.75" width="44.0" height="2.55" fill="#4485d7"/>
<rect x="454.13" y="483.75" width="44.0" height="2.55" fill="#6db33f"/>
<rect x="454.13" y="486" width="44.0" height="3.20" fill="#0c8f8d"/>
<rect x="454.13" y="488.9" width="44.0" height="3.00" fill="#b5daf6"/>
<rect x="454.13" y="491.6" width="44.0" height="6.20" fill="#8a5cb6"/>
<rect x="454.13" y="497.5" width="44.0" height="4.80" fill="#a5d14f"/>
<rect x="454.13" y="502" width="44.0" height="2.05" fill="#de423f"/>
<rect x="454.13" y="503.75" width="44.0" height="5.65" fill="#fdc99b"/>
<rect x="454.13" y="509.1" width="44.0" height="3.10" fill="#a90e0e"/>
<rect x="454.13" y="511.9" width="44.0" height="3.15" fill="#f76f48"/>
<rect x="454.13" y="514.75" width="44.0" height="3.80" fill="#fbc41d"/>
<rect x="454.13" y="518.25" width="44.0" height="2.05" fill="#3cb88a"/>
<rect x="454.13" y="520" width="44.0" height="4.40" fill="#a5d14f"/>
<rect x="454.13" y="524.1" width="44.0" height="5.30" fill="#fb9c33"/>
<rect x="454.13" y="529.1" width="44.0" height="14.20" fill="#4485d7"/>
<rect x="503.26" y="442.5" width="44.0" height="2.80" fill="#6db33f"/>
<rect x="503.26" y="445" width="44.0" height="1.80" fill="#1e8e4e"/>
<rect x="503.26" y="446.5" width="44.0" height="6.55" fill="#0c8f8d"/>
<rect x="503.26" y="452.75" width="44.0" height="6.30" fill="#8a5cb6"/>
<rect x="503.26" y="458.75" width="44.0" height="8.55" fill="#a5d14f"/>
<rect x="503.26" y="467" width="44.0" height="2.80" fill="#fb9c33"/>
<rect x="503.26" y="469.5" width="44.0" height="6.05" fill="#fdc99b"/>
<rect x="503.26" y="475.25" width="44.0" height="6.80" fill="#f76f48"/>
<rect x="503.26" y="481.75" width="44.0" height="7.30" fill="#fbc41d"/>
<rect x="503.26" y="488.75" width="44.0" height="4.80" fill="#3dbde1"/>
<rect x="503.26" y="493.25" width="44.0" height="8.30" fill="#a5d14f"/>
<rect x="503.26" y="501.25" width="44.0" height="5.05" fill="#fb9c33"/>
<rect x="503.26" y="506" width="44.0" height="37.30" fill="#4485d7"/>
<rect x="552.39" y="398.5" width="44.0" height="10.05" fill="#0c8f8d"/>
<rect x="552.39" y="408.25" width="44.0" height="6.30" fill="#8a5cb6"/>
<rect x="552.39" y="414.25" width="44.0" height="13.05" fill="#a5d14f"/>
<rect x="552.39" y="427" width="44.0" height="5.80" fill="#fb9c33"/>
<rect x="552.39" y="432.5" width="44.0" height="6.05" fill="#fdc99b"/>
<rect x="552.39" y="438.25" width="44.0" height="10.80" fill="#f76f48"/>
<rect x="552.39" y="448.75" width="44.0" height="10.30" fill="#fbc41d"/>
<rect x="552.39" y="458.75" width="44.0" height="4.55" fill="#0c8f8d"/>
<rect x="552.39" y="463" width="44.0" height="6.80" fill="#3dbde1"/>
<rect x="552.39" y="469.5" width="44.0" height="8.80" fill="#a5d14f"/>
<rect x="552.39" y="478" width="44.0" height="5.30" fill="#fb9c33"/>
<rect x="552.39" y="483" width="44.0" height="60.30" fill="#4485d7"/>
<rect x="601.52" y="363.25" width="44.0" height="10.05" fill="#0c8f8d"/>
<rect x="601.52" y="373" width="44.0" height="9.30" fill="#3dbde1"/>
<rect x="601.52" y="382" width="44.0" height="6.55" fill="#8a5cb6"/>
<rect x="601.52" y="388.25" width="44.0" height="12.80" fill="#a5d14f"/>
<rect x="601.52" y="400.75" width="44.0" height="9.55" fill="#fb9c33"/>
<rect x="601.52" y="410" width="44.0" height="11.05" fill="#f76f48"/>
<rect x="601.52" y="420.75" width="44.0" height="10.05" fill="#fbc41d"/>
<rect x="601.52" y="430.5" width="44.0" height="7.30" fill="#0c8f8d"/>
<rect x="601.52" y="437.5" width="44.0" height="5.80" fill="#3dbde1"/>
<rect x="601.52" y="443" width="44.0" height="9.80" fill="#a5d14f"/>
<rect x="601.52" y="452.5" width="44.0" height="90.80" fill="#4485d7"/>
<rect x="650.65" y="333" width="44.0" height="10.05" fill="#0c8f8d"/>
<rect x="650.65" y="342.75" width="44.0" height="13.30" fill="#3dbde1"/>
<rect x="650.65" y="355.75" width="44.0" height="6.55" fill="#8a5cb6"/>
<rect x="650.65" y="362" width="44.0" height="12.80" fill="#a5d14f"/>
<rect x="650.65" y="374.5" width="44.0" height="10.05" fill="#fb9c33"/>
<rect x="650.65" y="384.25" width="44.0" height="10.05" fill="#d26a06"/>
<rect x="650.65" y="394" width="44.0" height="11.05" fill="#f76f48"/>
<rect x="650.65" y="404.75" width="44.0" height="10.30" fill="#fbc41d"/>
<rect x="650.65" y="414.75" width="44.0" height="7.55" fill="#0c8f8d"/>
<rect x="650.65" y="422" width="44.0" height="8.80" fill="#a5d14f"/>
<rect x="650.65" y="430.5" width="44.0" height="112.80" fill="#4485d7"/>
<rect x="699.78" y="313" width="44.0" height="10.05" fill="#0c8f8d"/>
<rect x="699.78" y="322.75" width="44.0" height="13.30" fill="#3dbde1"/>
<rect x="699.78" y="335.75" width="44.0" height="12.55" fill="#a5d14f"/>
<rect x="699.78" y="348" width="44.0" height="10.05" fill="#fb9c33"/>
<rect x="699.78" y="357.75" width="44.0" height="10.30" fill="#d26a06"/>
<rect x="699.78" y="367.75" width="44.0" height="10.80" fill="#f76f48"/>
<rect x="699.78" y="378.25" width="44.0" height="10.30" fill="#fbc41d"/>
<rect x="699.78" y="388.25" width="44.0" height="8.05" fill="#0c8f8d"/>
<rect x="699.78" y="396" width="44.0" height="8.55" fill="#a5d14f"/>
<rect x="699.78" y="404.25" width="44.0" height="139.05" fill="#4485d7"/>
<rect x="748.91" y="294.5" width="44.0" height="10.05" fill="#0c8f8d"/>
<rect x="748.91" y="304.25" width="44.0" height="13.55" fill="#3dbde1"/>
<rect x="748.91" y="317.5" width="44.0" height="12.80" fill="#a5d14f"/>
<rect x="748.91" y="330" width="44.0" height="9.30" fill="#fb9c33"/>
<rect x="748.91" y="339" width="44.0" height="10.30" fill="#d26a06"/>
<rect x="748.91" y="349" width="44.0" height="10.80" fill="#f76f48"/>
<rect x="748.91" y="359.5" width="44.0" height="10.80" fill="#fbc41d"/>
<rect x="748.91" y="370" width="44.0" height="7.30" fill="#0c8f8d"/>
<rect x="748.91" y="377" width="44.0" height="10.05" fill="#b5daf6"/>
<rect x="748.91" y="386.75" width="44.0" height="8.55" fill="#a5d14f"/>
<rect x="748.91" y="395" width="44.0" height="148.30" fill="#4485d7"/>
<rect x="798.04" y="257" width="44.0" height="10.05" fill="#0c8f8d"/>
<rect x="798.04" y="266.75" width="44.0" height="13.05" fill="#3dbde1"/>
<rect x="798.04" y="279.5" width="44.0" height="12.80" fill="#a5d14f"/>
<rect x="798.04" y="292" width="44.0" height="9.80" fill="#fb9c33"/>
<rect x="798.04" y="301.5" width="44.0" height="10.55" fill="#d26a06"/>
<rect x="798.04" y="311.75" width="44.0" height="15.30" fill="#a087c4"/>
<rect x="798.04" y="326.75" width="44.0" height="11.55" fill="#f76f48"/>
<rect x="798.04" y="338" width="44.0" height="10.55" fill="#fbc41d"/>
<rect x="798.04" y="348.25" width="44.0" height="9.55" fill="#b5daf6"/>
<rect x="798.04" y="357.5" width="44.0" height="11.30" fill="#de423f"/>
<rect x="798.04" y="368.5" width="44.0" height="174.80" fill="#4485d7"/>
<rect x="847.17" y="225" width="44.0" height="10.30" fill="#0c8f8d"/>
<rect x="847.17" y="235" width="44.0" height="13.30" fill="#3dbde1"/>
<rect x="847.17" y="248" width="44.0" height="12.30" fill="#a5d14f"/>
<rect x="847.17" y="260" width="44.0" height="9.80" fill="#fb9c33"/>
<rect x="847.17" y="269.5" width="44.0" height="10.80" fill="#d26a06"/>
<rect x="847.17" y="280" width="44.0" height="15.30" fill="#a087c4"/>
<rect x="847.17" y="295" width="44.0" height="11.55" fill="#f76f48"/>
<rect x="847.17" y="306.25" width="44.0" height="10.05" fill="#fbc41d"/>
<rect x="847.17" y="316" width="44.0" height="10.05" fill="#b5daf6"/>
<rect x="847.17" y="325.75" width="44.0" height="21.30" fill="#de423f"/>
<rect x="847.17" y="346.75" width="44.0" height="196.55" fill="#4485d7"/>
<rect x="896.30" y="195" width="44.0" height="13.05" fill="#3dbde1"/>
<rect x="896.30" y="207.75" width="44.0" height="12.55" fill="#a5d14f"/>
<rect x="896.30" y="220" width="44.0" height="15.30" fill="#a087c4"/>
<rect x="896.30" y="235" width="44.0" height="11.80" fill="#f76f48"/>
<rect x="896.30" y="246.5" width="44.0" height="16.30" fill="#8dbc0b"/>
<rect x="896.30" y="262.5" width="44.0" height="20.80" fill="#de423f"/>
<rect x="896.30" y="283" width="44.0" height="260.30" fill="#4485d7"/>
<rect x="945.43" y="153" width="44.0" height="13.05" fill="#3dbde1"/>
<rect x="945.43" y="165.75" width="44.0" height="12.55" fill="#a5d14f"/>
<rect x="945.43" y="178" width="44.0" height="15.30" fill="#a087c4"/>
<rect x="945.43" y="193" width="44.0" height="16.05" fill="#8dbc0b"/>
<rect x="945.43" y="208.75" width="44.0" height="21.55" fill="#de423f"/>
<rect x="945.43" y="230" width="44.0" height="313.30" fill="#4485d7"/>
<path d="M400.5,543.75 H996.0" stroke="#b0b0b0" stroke-width="1.5"/>
<path d="M397.0,543.6 h3.5" stroke="#dcdcdc" stroke-width="0.9"/>
<path d="M427.5,170 C435.71,176.27 460.33,194.77 476.75,207.6 C493.17,220.43 509.62,232.77 526,247 C542.38,261.23 558.58,279.58 575,293 C591.42,306.42 608.17,316.78 624.5,327.5 C640.83,338.22 656.75,349.00 673,357.3 C689.25,365.60 705.67,370.77 722,377.3 C738.33,383.83 754.72,387.10 771,396.5 C787.28,405.90 803.30,422.23 819.7,433.7 C836.10,445.17 852.93,454.95 869.4,465.3 C885.87,475.65 902.18,483.72 918.5,495.8 C934.82,507.88 959.17,530.80 967.3,537.8" fill="none" stroke="#d6a730" stroke-width="2.7" stroke-linejoin="round" stroke-linecap="round"/>
<path d="M427.5,170 C435.71,176.27 460.33,194.77 476.75,207.6 C493.17,220.43 509.62,232.77 526,247 C542.38,261.23 558.58,279.58 575,293 C591.42,306.42 608.17,316.78 624.5,327.5 C640.83,338.22 656.75,349.00 673,357.3 C689.25,365.60 705.67,370.77 722,377.3 C738.33,383.83 754.72,387.10 771,396.5 C787.28,405.90 803.30,422.23 819.7,433.7 C836.10,445.17 852.93,454.95 869.4,465.3 C885.87,475.65 902.18,483.72 918.5,495.8 C934.82,507.88 959.17,530.80 967.3,537.8" fill="none" stroke="#f0cb4a" stroke-width="1.7" stroke-linejoin="round" stroke-linecap="round"/>
<circle cx="427.8" cy="170.3" r="2.0" fill="#85742a"/>
<circle cx="427.35" cy="169.85" r="1.6" fill="#f7edb8"/>
<circle cx="477.05" cy="207.9" r="2.0" fill="#85742a"/>
<circle cx="476.6" cy="207.45" r="1.6" fill="#f7edb8"/>
<circle cx="526.3" cy="247.3" r="2.0" fill="#85742a"/>
<circle cx="525.85" cy="246.85" r="1.6" fill="#f7edb8"/>
<circle cx="575.3" cy="293.3" r="2.0" fill="#85742a"/>
<circle cx="574.85" cy="292.85" r="1.6" fill="#f7edb8"/>
<circle cx="624.8" cy="327.8" r="2.0" fill="#85742a"/>
<circle cx="624.35" cy="327.35" r="1.6" fill="#f7edb8"/>
<circle cx="673.3" cy="357.6" r="2.0" fill="#85742a"/>
<circle cx="672.85" cy="357.15000000000003" r="1.6" fill="#f7edb8"/>
<circle cx="722.3" cy="377.6" r="2.0" fill="#85742a"/>
<circle cx="721.85" cy="377.15000000000003" r="1.6" fill="#f7edb8"/>
<circle cx="771.3" cy="396.8" r="2.0" fill="#85742a"/>
<circle cx="770.85" cy="396.35" r="1.6" fill="#f7edb8"/>
<circle cx="820.0" cy="434.0" r="2.0" fill="#85742a"/>
<circle cx="819.5500000000001" cy="433.55" r="1.6" fill="#f7edb8"/>
<circle cx="869.6999999999999" cy="465.6" r="2.0" fill="#85742a"/>
<circle cx="869.25" cy="465.15000000000003" r="1.6" fill="#f7edb8"/>
<circle cx="918.8" cy="496.1" r="2.0" fill="#85742a"/>
<circle cx="918.35" cy="495.65000000000003" r="1.6" fill="#f7edb8"/>
<circle cx="967.5999999999999" cy="538.0999999999999" r="2.0" fill="#85742a"/>
<circle cx="967.15" cy="537.65" r="1.6" fill="#f7edb8"/>
<g><circle cx="10.5" cy="9.6" r="5" fill="#dfe6f6"/><path d="M5.7,8.2 C7.5,6.6 10,9.2 12,8 S14.6,6.6 15.2,7.6" fill="none" stroke="#2b3a9a" stroke-width="1.1"/><path d="M5.6,11 C7.5,9.6 10,12.2 12,11 S14.6,9.6 15.4,10.6" fill="none" stroke="#2b3a9a" stroke-width="1.1"/><path d="M7,13.2 C8.5,12.4 10.4,14 13.2,13.4" fill="none" stroke="#2b3a9a" stroke-width="0.8"/></g>
<path d="M28.3,6.2 V13.1 H35.3" fill="none" stroke="#3a3a3a" stroke-width="1.25"/><path d="M30.2,11 L32.2,9.1 L33,9.7 L35,7.2" fill="none" stroke="#3a3a3a" stroke-width="1"/>
<path d="M151.7,6.3 L158.7,12.8 M158.7,6.3 L151.7,12.8" stroke="#2b2a6a" stroke-width="1.15" fill="none"/>
<path d="M5.6,27.9 h7.2 l1.9,1.9 v6.4 a0.8,0.8 0 0 1 -0.8,0.8 h-8.3 a0.8,0.8 0 0 1 -0.8,-0.8 v-7.5 a0.8,0.8 0 0 1 0.8,-0.8z" fill="#8a8a8a"/><rect x="6.9" y="28.9" width="5.2" height="2.6" fill="#ececec"/><rect x="8.6" y="33.2" width="2.6" height="2.6" fill="#ececec"/>
<path d="M9.8,49 L5.2,52.5 L9.8,56 V54.1 C12,54 13.6,54.7 14.8,56.3 C14.6,53.4 12.8,51.2 9.8,50.9z" fill="none" stroke="#b5b5b5" stroke-width="0.85" stroke-linejoin="round"/>
<path d="M5.6,72.2 A4.4,4.4 0 0 1 13.4,70.2" fill="none" stroke="#222" stroke-width="1.25"/><path d="M14.6,68.4 V71.6 H11.4z" fill="#222"/><path d="M14.2,73.8 A4.4,4.4 0 0 1 6.4,75.8" fill="none" stroke="#222" stroke-width="1.25"/><path d="M5.2,77.6 V74.4 H8.4z" fill="#222"/>
<circle cx="57.6" cy="53.5" r="6.25" fill="#fff" stroke="#333" stroke-width="0.95"/>
<path d="M59.1,50.6 A3,3.3 0 1 0 59.1,56.0" fill="none" stroke="#333" stroke-width="1.15"/><path d="M54.2,52.6 h3.6 M54.2,54.2 h3.3" stroke="#333" stroke-width="0.8"/>
<circle cx="61.800000000000004" cy="57.5" r="4.9" fill="#fff"/><circle cx="61.800000000000004" cy="57.5" r="4.2" fill="#1b67de"/>
<path d="M60.00000000000001,59.2 L63.6,56.0" stroke="#bfe9ff" stroke-width="1.3" stroke-linecap="round"/>
<circle cx="116.2" cy="53.5" r="6.25" fill="#fff" stroke="#333" stroke-width="0.95"/>
<path d="M117.7,50.6 A3,3.3 0 1 0 117.7,56.0" fill="none" stroke="#333" stroke-width="1.15"/><path d="M112.80000000000001,52.6 h3.6 M112.80000000000001,54.2 h3.3" stroke="#333" stroke-width="0.8"/>
<circle cx="120.4" cy="57.5" r="4.9" fill="#fff"/><circle cx="120.4" cy="57.5" r="4.2" fill="#1b67de"/>
<rect x="118.5" y="55.6" width="3.8" height="3.8" rx="1" fill="#a9d4ff"/>
<circle cx="175.7" cy="53.5" r="6.25" fill="#fff" stroke="#333" stroke-width="0.95"/>
<path d="M177.2,50.6 A3,3.3 0 1 0 177.2,56.0" fill="none" stroke="#333" stroke-width="1.15"/><path d="M172.29999999999998,52.6 h3.6 M172.29999999999998,54.2 h3.3" stroke="#333" stroke-width="0.8"/>
<circle cx="179.89999999999998" cy="57.5" r="4.9" fill="#fff"/><circle cx="179.89999999999998" cy="57.5" r="4.2" fill="#1b67de"/>
<rect x="177.99999999999997" y="55.6" width="3.8" height="3.8" rx="1" fill="#a9d4ff"/>
<circle cx="234.4" cy="53.5" r="6.25" fill="#fff" stroke="#c9c9c9" stroke-width="0.95"/>
<path d="M235.9,50.6 A3,3.3 0 1 0 235.9,56.0" fill="none" stroke="#c9c9c9" stroke-width="1.15"/><path d="M231.0,52.6 h3.6 M231.0,54.2 h3.3" stroke="#c9c9c9" stroke-width="0.8"/>
<circle cx="238.6" cy="57.5" r="4.9" fill="#fff"/><circle cx="238.6" cy="57.5" r="4.2" fill="#ee8c8c"/>
<path d="M237.0,55.9 l3.2,3.2 M240.2,55.9 l-3.2,3.2" stroke="#fff" stroke-width="0.9"/>
<path d="M290.6,47.7 L286,53.4 L290.6,59.1 M294.4,47.7 L289.8,53.4 L294.4,59.1" fill="none" stroke="#1f6fe5" stroke-width="2.5" stroke-linejoin="miter"/>
<path d="M346.2,46.7 L353,53.45 L346.2,60.2 L339.4,53.45z" fill="#1fb41f"/>
<path d="M344.6,75.2 h4.2 l-2.1,2.3z" fill="#333"/>
<path d="M387.4,47.8 L391.8,53.6 L387.4,59.4 M391.2,47.8 L395.6,53.6 L391.2,59.4" fill="none" stroke="#cdcdcd" stroke-width="2.4" />
<g fill="#333"><ellipse cx="427.2" cy="49" rx="6.2" ry="2.3"/><path d="M421,50.4 c1.5,2.2 10.9,2.2 12.4,0 v3 c-1.5,2.2 -10.9,2.2 -12.4,0z"/><path d="M421,54.4 c1.5,2.2 10.9,2.2 12.4,0 v3 c-1.5,2.2 -10.9,2.2 -12.4,0z"/></g><circle cx="431.2" cy="56.2" r="2.9" fill="#fff"/><circle cx="431.2" cy="56.2" r="1.9" fill="#fff" stroke="#333" stroke-width="0.9"/><path d="M432.7,57.7 L435,60" stroke="#333" stroke-width="1.2"/><path d="M422.5,56.6 h3" stroke="#fff" stroke-width="0.7"/>
<path d="M944,8.9 h4.2 l-2.1,2.3z" fill="#fff"/>
<path d="M965,9.7 h7.8" stroke="#fff" stroke-width="1.1"/>
<rect x="989.3" y="6.3" width="5.6" height="5.6" rx="0.8" fill="none" stroke="#cfd3ee" stroke-width="0.9"/><path d="M987.6,8 v5 a0.8,0.8 0 0 0 0.8,0.8 h5" fill="none" stroke="#cfd3ee" stroke-width="0.9"/>
<path d="M1009.7,6.4 L1016.8,13.3 M1016.8,6.4 L1009.7,13.3" stroke="#fff" stroke-width="1.5"/>
<circle cx="898.2" cy="28.2" r="2" fill="none" stroke="#777" stroke-width="0.8"/><path d="M899.7,29.7 l1.8,1.9" stroke="#777" stroke-width="0.9"/>
<circle cx="52.3" cy="119.0" r="2" fill="none" stroke="#777" stroke-width="0.8"/><path d="M53.8,120.5 l1.8,1.9" stroke="#777" stroke-width="0.9"/>
<rect x="988.4" y="24.6" width="8.6" height="8" rx="1" fill="none" stroke="#444" stroke-width="0.9"/><path d="M992.2,24.6 v8" stroke="#444" stroke-width="0.9"/><rect x="993.6" y="29.4" width="4.4" height="3.8" rx="0.6" fill="#333"/>
<path d="M1007.4,25.6 h9.7 M1007.4,29 h9.7 M1007.4,32.4 h9.7" stroke="#333" stroke-width="1.05"/>
<polygon points="32.50,115.80 33.53,118.48 36.40,118.63 34.16,120.44 34.91,123.22 32.50,121.65 30.09,123.22 30.84,120.44 28.60,118.63 31.47,118.48" fill="#222"/>
<rect x="248.7" y="116.6" width="7.2" height="6.4" rx="0.6" fill="none" stroke="#444" stroke-width="0.8"/><path d="M248.7,118.8 h7.2 M248.7,120.9 h7.2 M251.1,116.6 v6.4 M253.5,116.6 v6.4" stroke="#444" stroke-width="0.6"/>
<circle cx="289" cy="119.9" r="3.7" fill="none" stroke="#444" stroke-width="0.8"/><path d="M286.9,118.4 h4.2 l-1.5,1.9 v1.9 l-1.2,-0.7 v-1.2z" fill="none" stroke="#444" stroke-width="0.55"/>
<rect x="322" y="116.6" width="6.6" height="6.4" rx="0.6" fill="none" stroke="#333" stroke-width="0.85"/><path d="M323.5,119.8 l1.4,1.5 l2.4,-2.9" fill="none" stroke="#333" stroke-width="0.85"/>
<path d="M124.6,135 v6.6 M123.2,140 l1.4,1.6 l1.4,-1.6" fill="none" stroke="#e8e8e8" stroke-width="0.7"/><path d="M127.2,135.6 h4.2 M127.2,137.6 h3 M127.2,139.6 h1.8" stroke="#e8e8e8" stroke-width="0.7"/>
<rect x="333.3" y="134.2" width="7" height="7.4" fill="none" stroke="#e8e8e8" stroke-width="0.7"/><path d="M336.8,135.6 v4.6 M335.2,135.8 v4.2 M338.4,135.8 v4.2" stroke="#e8e8e8" stroke-width="0.6"/>
<path d="M335.3,154.1 l2,-2 l2,2" fill="none" stroke="#a5a5a5" stroke-width="0.7"/>
<path d="M335.3,538.6 l2,2 l2,-2" fill="none" stroke="#a5a5a5" stroke-width="0.7"/>
<path d="M78.6,548.6 l-1.8,1.8 l1.8,1.8" fill="none" stroke="#a5a5a5" stroke-width="0.7"/>
<path d="M324.4,548.6 l1.8,1.8 l-1.8,1.8" fill="none" stroke="#a5a5a5" stroke-width="0.7"/>
</svg>
</div></body></html>
